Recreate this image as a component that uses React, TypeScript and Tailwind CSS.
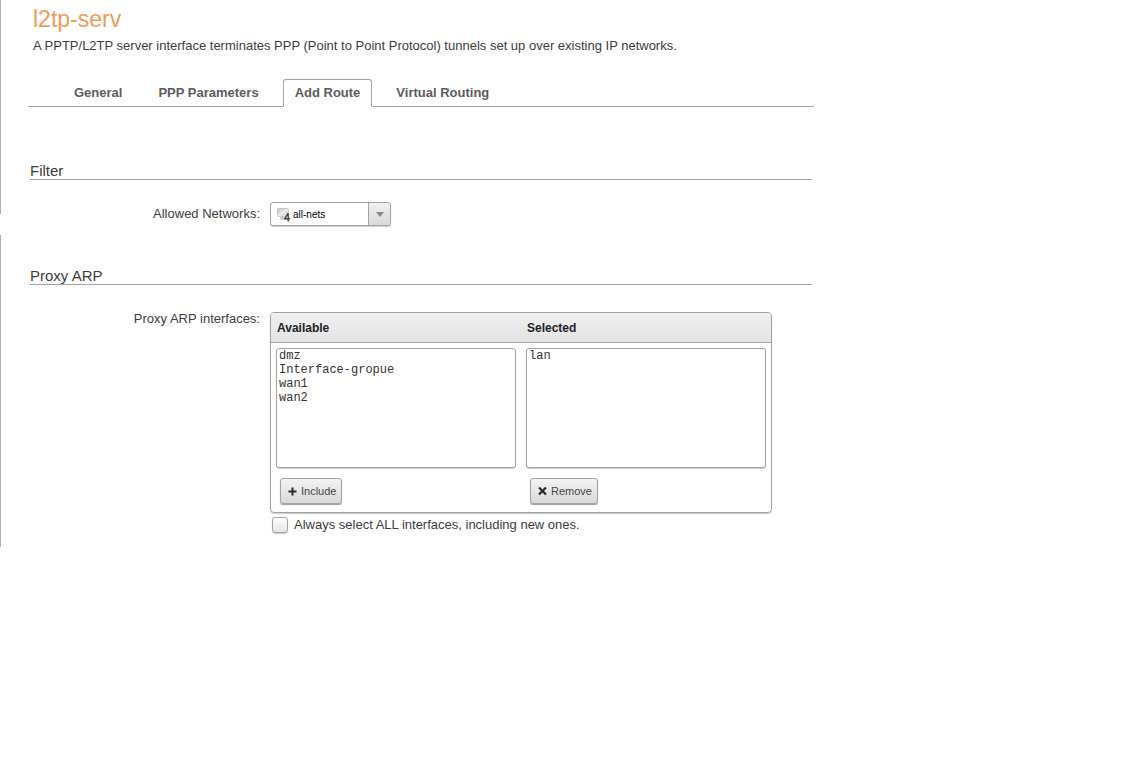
import { useState } from "react"
import clsx from "clsx"

const tabs = ["General", "PPP Parameters", "Add Route", "Virtual Routing"]

const NetworkIcon = () => (
  <svg width="14" height="14" viewBox="0 0 14 14" aria-hidden="true">
    <defs>
      <linearGradient id="screen" x1="0" y1="0" x2="1" y2="1">
        <stop offset="0" stopColor="#bcbcbc" />
        <stop offset="0.5" stopColor="#ececec" />
        <stop offset="1" stopColor="#c9c9c9" />
      </linearGradient>
    </defs>
    <rect x="0.5" y="0.5" width="11" height="8" rx="1" fill="url(#screen)" stroke="#c6c6c6" />
    <path d="M2.5 11.5h5.5L7 9H4z" fill="#c0c0c0" />
    <path
      d="M11.2 5.2 7.6 10.9H13M11.2 5.2V13.5"
      fill="none"
      stroke="#eee"
      strokeWidth="2.6"
    />
    <path
      d="M11.2 5.2 7.6 10.9H13M11.2 5.2V13.5"
      fill="none"
      stroke="#3a3a3a"
      strokeWidth="1.3"
    />
  </svg>
)

const PlusIcon = () => (
  <svg width="9" height="9" viewBox="0 0 9 9" aria-hidden="true">
    <path d="M4.5 0.5v8M0.5 4.5h8" stroke="#2b2b2b" strokeWidth="2" />
  </svg>
)

const CrossIcon = () => (
  <svg width="9" height="9" viewBox="0 0 9 9" aria-hidden="true">
    <path d="M1 0.5l7 7M8 0.5l-7 7" stroke="#2b2b2b" strokeWidth="2.2" />
  </svg>
)

interface InterfaceListProps {
  label: string
  items: string[]
  action: string
  icon: React.ReactNode
  onMove: (names: string[]) => void
}

const InterfaceList = ({ label, items, action, icon, onMove }: InterfaceListProps) => {
  const [picked, setPicked] = useState<string[]>([])

  const handleMoveClick = () => {
    onMove(picked)
    setPicked([])
  }

  return (
    <div className="min-w-0 flex-1">
      <div className="flex h-[30px] items-center border-b border-[#a3a3a3] bg-linear-to-b from-[#f1f0f1] to-[#e4e3e4] px-1.5">
        <label htmlFor={label} className="text-xs font-bold text-[#222]">
          {label}
        </label>
      </div>
      <div className="px-[5px] pt-[5px] pb-2">
        <select
          id={label}
          multiple
          value={picked}
          onChange={(e) =>
            setPicked(Array.from(e.target.selectedOptions, (o) => o.value))
          }
          className="block h-[120px] w-full rounded-[3px] border border-[#a3a3a3] bg-white font-['Liberation_Mono',monospace] text-xs text-[#333] shadow-[0_1px_1px_#ccc]"
        >
          {items.map((item) => (
            <option key={item} className="min-h-0 px-0.5 py-0 leading-[14px]">
              {item}
            </option>
          ))}
        </select>
        <button
          type="button"
          onClick={handleMoveClick}
          className="mt-[10px] ml-1 flex h-[26px] items-center gap-1 rounded-[3px] border border-[#a3a3a3] bg-linear-to-b from-[#f3f3f4] to-[#d9d9dc] pr-[5px] pl-[7px] text-[11px] text-[#444] shadow-[0_1px_1px_#999]"
        >
          {icon}
          {action}
        </button>
      </div>
    </div>
  )
}

const App = () => {
  const [activeTab, setActiveTab] = useState("Add Route")
  const [selected, setSelected] = useState(["lan"])
  const [available, setAvailable] = useState([
    "dmz",
    "Interface-gropue",
    "wan1",
    "wan2",
  ])

  const include = (names: string[]) => {
    setAvailable(available.filter((name) => !names.includes(name)))
    setSelected([...selected, ...names])
  }

  const remove = (names: string[]) => {
    setSelected(selected.filter((name) => !names.includes(name)))
    setAvailable([...available, ...names])
  }

  return (
    <div className="flex bg-white font-['Liberation_Sans',Arial,sans-serif] text-[13px] text-[#3c3c3c]">
      <div className="flex w-px shrink-0 flex-col gap-[21px]">
        <div className="h-[214px] bg-[#b0b0b0]" />
        <div className="flex-1 bg-[#b0b0b0]" />
      </div>

      <main className="ml-[27px] max-w-[786px] flex-1 pt-[7px] pb-[14px]">
        <header className="px-[5px]">
          <h1 className="text-[23px] leading-6 text-[#ee9a5a]">l2tp-serv</h1>
          <p className="mt-[5px] leading-5">
            A PPTP/L2TP server interface terminates PPP (Point to Point Protocol)
            tunnels set up over existing IP networks.
          </p>
        </header>

        <nav className="mt-[23px] flex h-7 gap-3 border-b border-[#a3a3a3] pl-[34px]">
          {tabs.map((tab) => (
            <button
              key={tab}
              type="button"
              onClick={() => setActiveTab(tab)}
              className={clsx(
                "h-7 rounded-t-[3px] border px-[11px] font-bold text-[#5c5c5c]",
                tab === activeTab
                  ? "border-[#a3a3a3] border-b-white bg-white"
                  : "border-transparent"
              )}
            >
              {tab}
            </button>
          ))}
        </nav>

        <section className="mx-0.5 mt-[56px]">
          <h2 className="border-b border-[#a3a3a3] text-[15px] leading-4">
            Filter
          </h2>
          <div className="mt-[22px] flex items-center gap-[10px]">
            <label htmlFor="networks" className="w-[230px] text-right">
              Allowed Networks:
            </label>
            <div className="relative h-6 w-[121px]">
              <select
                id="networks"
                className="h-6 w-full appearance-none rounded-[3px] border border-[#a3a3a3] bg-white pr-6 pl-[22px] text-[10px] text-black shadow-[0_1px_1px_#ccc]"
              >
                <option>all-nets</option>
              </select>
              <span className="pointer-events-none absolute top-[6px] left-[7px]">
                <NetworkIcon />
              </span>
              <span className="pointer-events-none absolute inset-y-px right-px flex w-[22px] items-center justify-center rounded-r-[2px] border-l border-[#a3a3a3] bg-linear-to-b from-[#f1f1f2] to-[#d9d9dc]">
                <svg width="8" height="5" viewBox="0 0 8 5" aria-hidden="true">
                  <path d="M0 0h8L4 5z" fill="#888" />
                </svg>
              </span>
            </div>
          </div>
        </section>

        <section className="mx-0.5 mt-[42px]">
          <h2 className="border-b border-[#a3a3a3] text-[15px] leading-4">
            Proxy ARP
          </h2>
          <div className="mt-[27px] flex gap-[10px]">
            <div className="w-[230px] shrink-0 text-right leading-[14px]">
              Proxy ARP interfaces:
            </div>
            <div className="max-w-[502px] flex-1">
              <div className="flex overflow-hidden rounded-[4px] border border-[#a3a3a3] shadow-[0_1px_1px_#ccc]">
                <InterfaceList
                  label="Available"
                  items={available}
                  action="Include"
                  icon={<PlusIcon />}
                  onMove={include}
                />
                <InterfaceList
                  label="Selected"
                  items={selected}
                  action="Remove"
                  icon={<CrossIcon />}
                  onMove={remove}
                />
              </div>
              <label className="mt-1 ml-0.5 flex items-center gap-1.5 leading-4">
                <input
                  type="checkbox"
                  className="size-4 appearance-none rounded-[3px] border border-[#a3a3a3] bg-linear-to-b from-white to-[#e4e4e6] shadow-[0_1px_1px_#ccc] checked:from-[#999] checked:to-[#777]"
                />
                Always select ALL interfaces, including new ones.
              </label>
            </div>
          </div>
        </section>
      </main>
    </div>
  )
}

export default App
